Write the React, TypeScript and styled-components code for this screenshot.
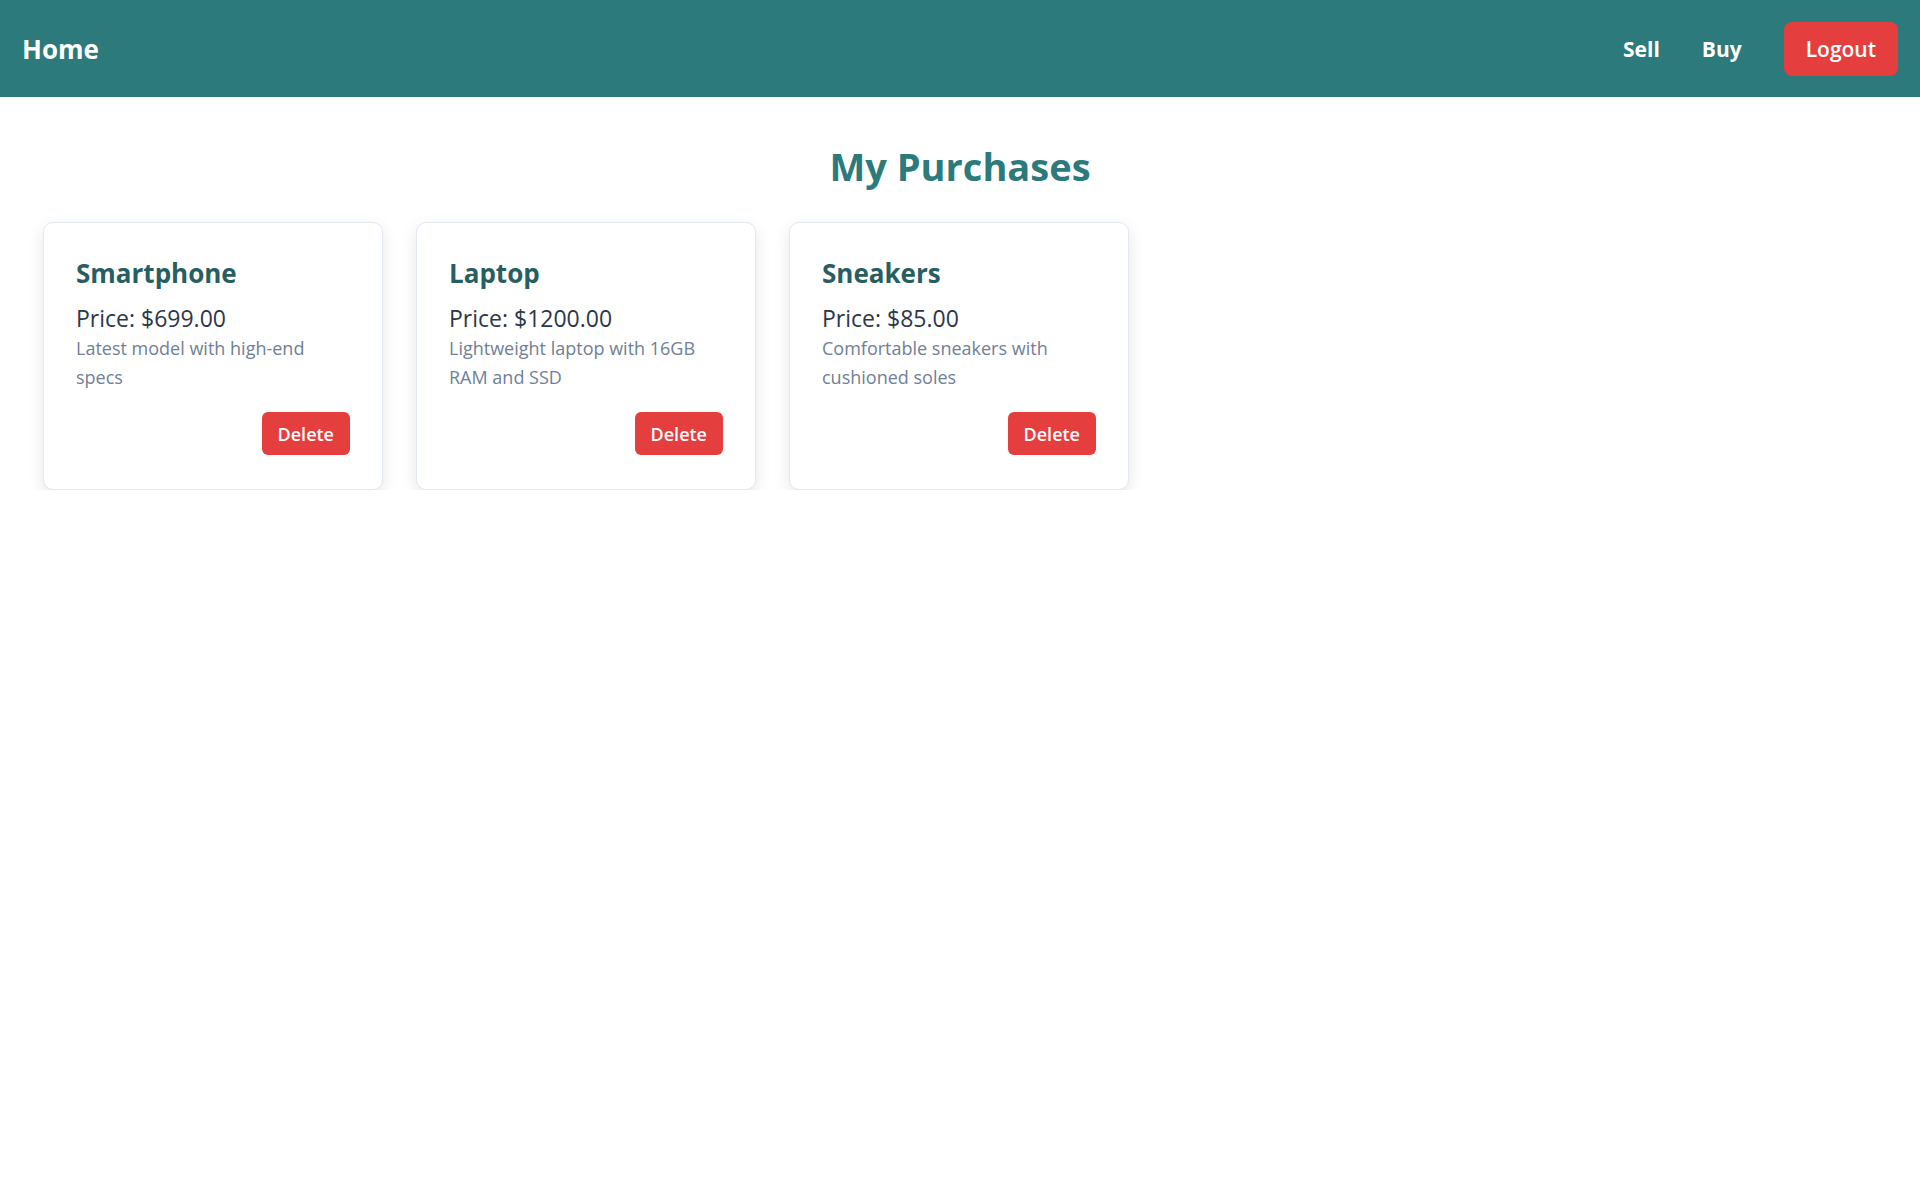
import React, { ReactElement } from 'react';
import styled, { createGlobalStyle } from 'styled-components';

interface Purchase {
  id: number;
  name: string;
  price: number;
  description: string;
}

const PURCHASES: Purchase[] = [
  { id: 1, name: 'Smartphone', price: 699, description: 'Latest model with high-end specs' },
  { id: 2, name: 'Laptop', price: 1200, description: 'Lightweight laptop with 16GB RAM and SSD' },
  { id: 3, name: 'Sneakers', price: 85, description: 'Comfortable sneakers with cushioned soles' },
];

function App(): ReactElement {
  return (
    <>
      <GlobalStyle />
      <Navbar>
        <Brand href="#">Home</Brand>
        <NavLinks>
          <NavLink href="#">Sell</NavLink>
          <NavLink href="#">Buy</NavLink>
          <LogoutButton type="button">Logout</LogoutButton>
        </NavLinks>
      </Navbar>
      <Main>
        <PageTitle>My Purchases</PageTitle>
        <CardList>
          {PURCHASES.map((item) => (
            <Card key={item.id}>
              <CardTitle>{item.name}</CardTitle>
              <Price>Price: ${item.price.toFixed(2)}</Price>
              <Description>{item.description}</Description>
              <CardActions>
                <DeleteButton type="button">Delete</DeleteButton>
              </CardActions>
            </Card>
          ))}
        </CardList>
      </Main>
    </>
  );
}

const GlobalStyle = createGlobalStyle`
  * {
    box-sizing: border-box;
  }
  body {
    margin: 0;
    background: #ffffff;
    font-family: 'Open Sans', 'Noto Sans', sans-serif;
  }
`;

const Navbar = styled.nav`
  display: flex;
  align-items: center;
  justify-content: space-between;
  height: 97px;
  padding: 0 22px;
  background-color: #2c7a7b;
`;

const Brand = styled.a`
  color: #ffffff;
  font-size: 26px;
  font-weight: 700;
  text-decoration: none;
`;

const NavLinks = styled.div`
  display: flex;
  align-items: center;
  gap: 42px;
`;

const NavLink = styled.a`
  color: #ffffff;
  font-size: 21px;
  font-weight: 700;
  text-decoration: none;
`;

const LogoutButton = styled.button`
  height: 54px;
  padding: 0 22px;
  border: none;
  border-radius: 8px;
  background-color: #e53e3e;
  color: #ffffff;
  font-family: inherit;
  font-size: 21px;
  font-weight: 600;
  cursor: pointer;
`;

const Main = styled.main`
  padding: 0 43px;
`;

const PageTitle = styled.h1`
  margin: 47px 0 32px;
  text-align: center;
  color: #2c7a7b;
  font-size: 38px;
  font-weight: 700;
  line-height: 1.2;
`;

const CardList = styled.div`
  display: flex;
  flex-wrap: wrap;
  gap: 33px;
`;

const Card = styled.div`
  width: 340px;
  padding: 32px 32px 34px;
  border: 1px solid #e2e8f0;
  border-radius: 10px;
  background: #ffffff;
  box-shadow: 0 5px 16px rgba(0, 0, 0, 0.1);
`;

const CardTitle = styled.h2`
  margin: 0 0 11px;
  color: #285e61;
  font-size: 26px;
  font-weight: 700;
  line-height: 1.45;
`;

const Price = styled.p`
  margin: 0;
  color: #2d3748;
  font-size: 23px;
  line-height: 1.35;
`;

const Description = styled.p`
  margin: 0;
  color: #718096;
  font-size: 18px;
  line-height: 29px;
`;

const CardActions = styled.div`
  display: flex;
  justify-content: flex-end;
  margin-top: 20px;
`;

const DeleteButton = styled.button`
  height: 43px;
  padding: 0 16px;
  border: none;
  border-radius: 6px;
  background-color: #e53e3e;
  color: #ffffff;
  font-family: inherit;
  font-size: 18px;
  font-weight: 600;
  cursor: pointer;
`;

export default App;
